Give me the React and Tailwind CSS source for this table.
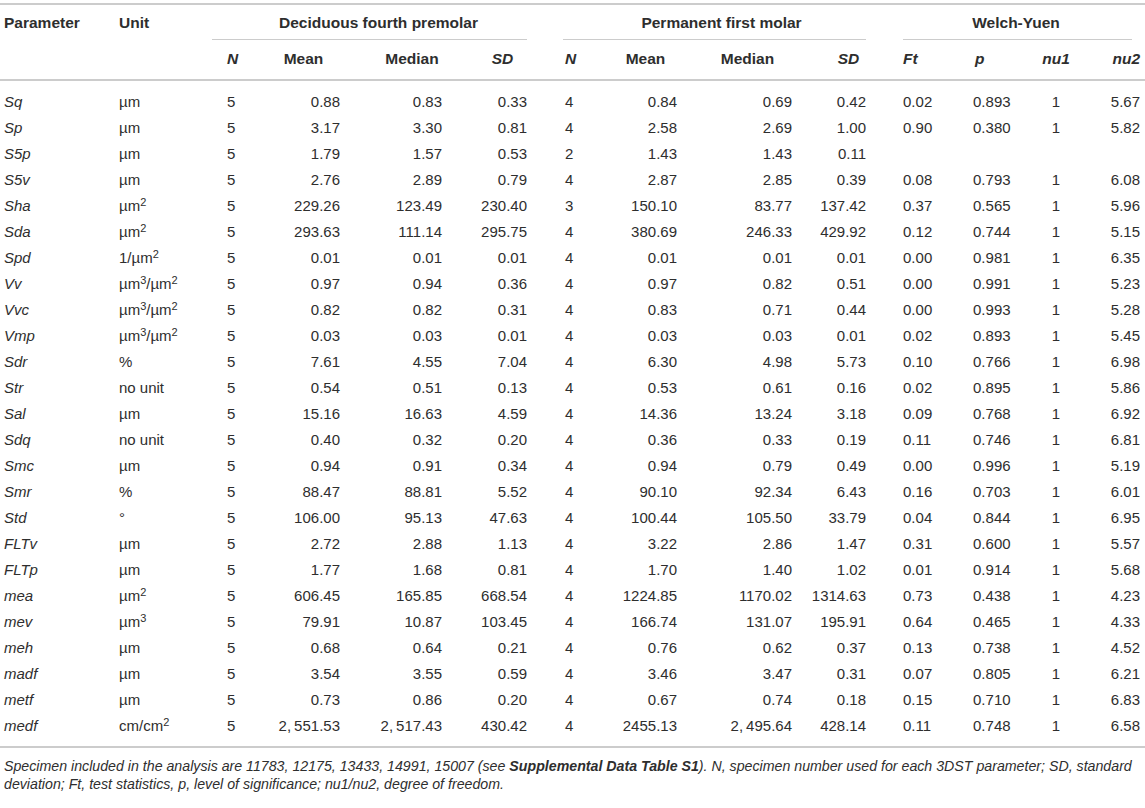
import React from 'react';

const rows = [
  ['Sq', 'µm', '5', '0.88', '0.83', '0.33', '4', '0.84', '0.69', '0.42', '0.02', '0.893', '1', '5.67'],
  ['Sp', 'µm', '5', '3.17', '3.30', '0.81', '4', '2.58', '2.69', '1.00', '0.90', '0.380', '1', '5.82'],
  ['S5p', 'µm', '5', '1.79', '1.57', '0.53', '2', '1.43', '1.43', '0.11', '', '', '', ''],
  ['S5v', 'µm', '5', '2.76', '2.89', '0.79', '4', '2.87', '2.85', '0.39', '0.08', '0.793', '1', '6.08'],
  ['Sha', 'µm^2', '5', '229.26', '123.49', '230.40', '3', '150.10', '83.77', '137.42', '0.37', '0.565', '1', '5.96'],
  ['Sda', 'µm^2', '5', '293.63', '111.14', '295.75', '4', '380.69', '246.33', '429.92', '0.12', '0.744', '1', '5.15'],
  ['Spd', '1/µm^2', '5', '0.01', '0.01', '0.01', '4', '0.01', '0.01', '0.01', '0.00', '0.981', '1', '6.35'],
  ['Vv', 'µm^3/µm^2', '5', '0.97', '0.94', '0.36', '4', '0.97', '0.82', '0.51', '0.00', '0.991', '1', '5.23'],
  ['Vvc', 'µm^3/µm^2', '5', '0.82', '0.82', '0.31', '4', '0.83', '0.71', '0.44', '0.00', '0.993', '1', '5.28'],
  ['Vmp', 'µm^3/µm^2', '5', '0.03', '0.03', '0.01', '4', '0.03', '0.03', '0.01', '0.02', '0.893', '1', '5.45'],
  ['Sdr', '%', '5', '7.61', '4.55', '7.04', '4', '6.30', '4.98', '5.73', '0.10', '0.766', '1', '6.98'],
  ['Str', 'no unit', '5', '0.54', '0.51', '0.13', '4', '0.53', '0.61', '0.16', '0.02', '0.895', '1', '5.86'],
  ['Sal', 'µm', '5', '15.16', '16.63', '4.59', '4', '14.36', '13.24', '3.18', '0.09', '0.768', '1', '6.92'],
  ['Sdq', 'no unit', '5', '0.40', '0.32', '0.20', '4', '0.36', '0.33', '0.19', '0.11', '0.746', '1', '6.81'],
  ['Smc', 'µm', '5', '0.94', '0.91', '0.34', '4', '0.94', '0.79', '0.49', '0.00', '0.996', '1', '5.19'],
  ['Smr', '%', '5', '88.47', '88.81', '5.52', '4', '90.10', '92.34', '6.43', '0.16', '0.703', '1', '6.01'],
  ['Std', '°', '5', '106.00', '95.13', '47.63', '4', '100.44', '105.50', '33.79', '0.04', '0.844', '1', '6.95'],
  ['FLTv', 'µm', '5', '2.72', '2.88', '1.13', '4', '3.22', '2.86', '1.47', '0.31', '0.600', '1', '5.57'],
  ['FLTp', 'µm', '5', '1.77', '1.68', '0.81', '4', '1.70', '1.40', '1.02', '0.01', '0.914', '1', '5.68'],
  ['mea', 'µm^2', '5', '606.45', '165.85', '668.54', '4', '1224.85', '1170.02', '1314.63', '0.73', '0.438', '1', '4.23'],
  ['mev', 'µm^3', '5', '79.91', '10.87', '103.45', '4', '166.74', '131.07', '195.91', '0.64', '0.465', '1', '4.33'],
  ['meh', 'µm', '5', '0.68', '0.64', '0.21', '4', '0.76', '0.62', '0.37', '0.13', '0.738', '1', '4.52'],
  ['madf', 'µm', '5', '3.54', '3.55', '0.59', '4', '3.46', '3.47', '0.31', '0.07', '0.805', '1', '6.21'],
  ['metf', 'µm', '5', '0.73', '0.86', '0.20', '4', '0.67', '0.74', '0.18', '0.15', '0.710', '1', '6.83'],
  ['medf', 'cm/cm^2', '5', '2,\u2009551.53', '2,\u2009517.43', '430.42', '4', '2455.13', '2,\u2009495.64', '428.14', '0.11', '0.748', '1', '6.58'],
];

// column widths, one per cell
const colWidths = [
  'w-[115px]', 'w-[97px]', 'w-[50px]', 'w-[83px]', 'w-[102px]', 'w-[98px]', 'w-[55px]',
  'w-[85px]', 'w-[115px]', 'w-[80px]', 'w-[80px]', 'w-[70px]', 'w-[52px]', 'w-[63px]',
];

// body cell alignment per column
const cellAlign = [
  'text-left pl-[4px] italic',
  'text-left pl-[4px]',
  'text-left pl-[15px]',
  'text-right pr-[5px]',
  'text-right pr-[5px]',
  'text-right pr-[18px]',
  'text-left pl-[20px]',
  'text-right pr-[8px]',
  'text-right pr-[8px]',
  'text-right pr-[14px]',
  'text-left pl-[23px]',
  'text-left pl-[13px]',
  'text-center',
  'text-right pr-[5px]',
];

const subHeads = [
  { label: 'N', cls: 'text-left pl-[15px] italic' },
  { label: 'Mean', cls: 'text-center' },
  { label: 'Median', cls: 'text-center pl-[32px]' },
  { label: 'SD', cls: 'text-center pl-[13px] italic' },
  { label: 'N', cls: 'text-left pl-[20px] italic' },
  { label: 'Mean', cls: 'text-center pl-[6px]' },
  { label: 'Median', cls: 'text-center pl-[10px]' },
  { label: 'SD', cls: 'text-center pl-[17px] italic' },
  { label: 'Ft', cls: 'text-left pl-[23px] italic' },
  { label: 'p', cls: 'text-left pl-[15px] italic' },
  { label: 'nu1', cls: 'text-center italic' },
  { label: 'nu2', cls: 'text-right pr-[5px] italic' },
];

function Unit({ value }) {
  const parts = value.split(/\^(\d)/);
  return (
    <>
      {parts.map((p, i) =>
        i % 2 === 1 ? (
          <sup key={i} className="text-[11px]">{p}</sup>
        ) : (
          <span key={i}>{p}</span>
        )
      )}
    </>
  );
}

export default function App() {
  return (
    <div className="w-[1145px] h-[808px] bg-white pt-[3px] text-[#2e2e2e] font-['Liberation_Sans',Arial,sans-serif] text-[15px] leading-[18px]">
      <table className="table-fixed w-[1145px] border-collapse border-t-2 border-[#cccccc]">
        <colgroup>
          {colWidths.map((w, i) => (
            <col key={i} className={w} />
          ))}
        </colgroup>
        <thead className="text-[15.5px]">
          <tr className="h-[36px]">
            <th className="p-0 pt-[9px] align-top text-left pl-[4px] font-bold">Parameter</th>
            <th className="p-0 pt-[9px] align-top text-left pl-[4px] font-bold">Unit</th>
            <th colSpan={4} className="p-0 align-top font-bold">
              <div className="pt-[9px] text-center">Deciduous fourth premolar</div>
              <div className="mr-[18px] mt-[7px] border-b border-[#cccccc]" />
            </th>
            <th colSpan={4} className="p-0 align-top font-bold">
              <div className="pt-[9px] pl-[18px] text-center">Permanent first molar</div>
              <div className="ml-[18px] mr-[14px] mt-[7px] border-b border-[#cccccc]" />
            </th>
            <th colSpan={4} className="p-0 align-top font-bold">
              <div className="pt-[9px] pl-[7px] text-center">Welch-Yuen</div>
              <div className="ml-[23px] mr-[13px] mt-[7px] border-b border-[#cccccc]" />
            </th>
          </tr>
          <tr className="h-[40px] border-b-2 border-[#cccccc]">
            <th className="p-0" />
            <th className="p-0" />
            {subHeads.map((h, i) => (
              <th key={i} className={`p-0 pb-[2px] font-bold ${h.cls}`}>
                {h.label}
              </th>
            ))}
          </tr>
        </thead>
        <tbody>
          <tr className="h-[9px]">
            <td colSpan={14} className="p-0" />
          </tr>
          {rows.map((r) => (
            <tr key={r[0]} className="h-[26px]">
              {r.map((c, i) => (
                <td key={i} className={`p-0 whitespace-nowrap ${cellAlign[i]}`}>
                  {i === 1 ? <Unit value={c} /> : c}
                </td>
              ))}
            </tr>
          ))}
          <tr className="h-[8px] border-b-2 border-[#cccccc]">
            <td colSpan={14} className="p-0" />
          </tr>
        </tbody>
      </table>

      {/* Table footnote */}
      <div className="pt-[9px] pl-[4px] text-[14.2px] leading-[18px] italic">
        <div className="whitespace-nowrap">
          Specimen included in the analysis are 11783, 12175, 13433, 14991, 15007 (see{' '}
          <b>Supplemental Data Table S1</b>). N, specimen number used for each 3DST parameter; SD, standard
        </div>
        <div className="whitespace-nowrap">
          deviation; Ft, test statistics, p, level of significance; nu1/nu2, degree of freedom.
        </div>
      </div>
    </div>
  );
}
